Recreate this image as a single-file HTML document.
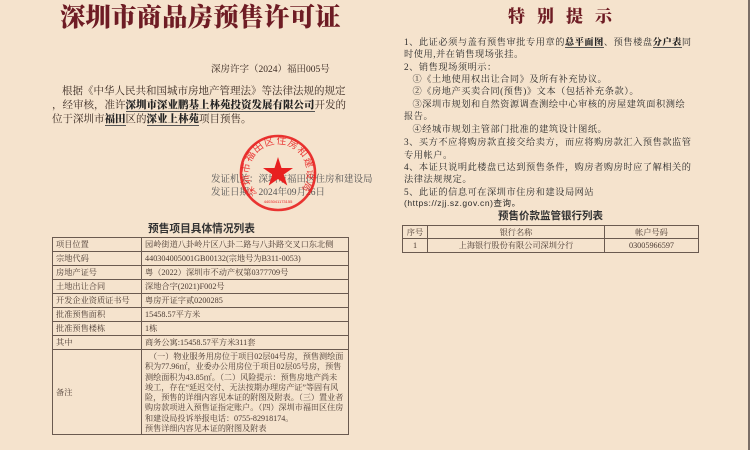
<!DOCTYPE html>
<html><head><meta charset="utf-8"><style>
*{margin:0;padding:0;box-sizing:border-box}
body{width:750px;height:450px;overflow:hidden;background:#f5e3cd;position:relative;font-family:"Liberation Serif","Noto Serif CJK SC",serif;color:#3a2a22}
.abs{position:absolute;white-space:nowrap}
.title{left:60px;top:-2px;font-size:25.5px;font-weight:900;color:#6e1c24;font-family:"Noto Serif CJK SC",serif}
.p{font-size:10.5px;line-height:14px}
b.u{font-weight:900;color:#222;border-bottom:1.5px solid #555}
table{border-collapse:collapse;position:absolute}
td{border:1px solid #6a5a50;font-size:8.2px;padding:0 3px;color:#4a3a32;vertical-align:middle}
.rt{left:404px;font-size:9.2px;letter-spacing:0.55px;color:#2a2a2a}
</style></head><body>
<div class="abs title">深圳市商品房预售许可证</div>
<div class="abs p" style="left:211px;top:63px;font-size:9.5px">深房许字（2024）福田005号</div>
<div class="abs p" style="left:62px;top:85px">根据《中华人民共和国城市房地产管理法》等法律法规的规定</div>
<div class="abs p" style="left:52px;top:99px">，经审核，准许<b class="u">深圳市深业鹏基上林苑投资发展有限公司</b>开发的</div>
<div class="abs p" style="left:52px;top:113px">位于深圳市<b class="u">福田</b>区的<b class="u">深业上林苑</b>项目预售。</div>
<div class="abs p" style="left:211px;top:173px;font-size:9.5px;color:#555">发证机关：深圳市福田区住房和建设局</div>
<div class="abs p" style="left:211px;top:186px;font-size:9.5px;color:#555">发证日期：2024年09月26日</div>
<svg class="abs" style="left:238px;top:133px" width="80" height="80" viewBox="0 0 80 80">
<defs><path id="arc" d="M19.5 60.5 A29 29 0 1 1 60.5 60.5"/></defs>
<circle cx="40" cy="40" r="37" fill="none" stroke="#e82020" stroke-width="2.6" opacity="0.9"/>
<text font-size="10" fill="#e82020" opacity="0.85" font-family="Noto Sans CJK SC" letter-spacing="1"><textPath href="#arc" startOffset="0">深圳市福田区住房和建设局</textPath></text>
<text x="40" y="70" font-size="4" fill="#e82020" text-anchor="middle" font-family="Liberation Sans">4403041173155</text>
<polygon points="40,24 43.5,35 55,35 45.7,41.5 49.3,52.5 40,46 30.7,52.5 34.3,41.5 25,35 36.5,35" fill="#e82020"/>
</svg>
<div class="abs" style="left:148px;top:221px;font-size:10.7px;font-weight:bold;font-family:'Noto Sans CJK SC',sans-serif;color:#333">预售项目具体情况列表</div>
<table style="left:52px;top:237px;width:297px">
<tr style="height:14px"><td style="width:89px">项目位置</td><td>园岭街道八卦岭片区八卦二路与八卦路交叉口东北侧</td></tr>
<tr style="height:14px"><td>宗地代码</td><td>440304005001GB00132(宗地号为B311-0053)</td></tr>
<tr style="height:14px"><td>房地产证号</td><td>粤（2022）深圳市不动产权第0377709号</td></tr>
<tr style="height:14px"><td>土地出让合同</td><td>深地合字(2021)F002号</td></tr>
<tr style="height:14px"><td>开发企业资质证书号</td><td>粤房开证字贰0200285</td></tr>
<tr style="height:14px"><td>批准预售面积</td><td>15458.57平方米</td></tr>
<tr style="height:14px"><td>批准预售楼栋</td><td>1栋</td></tr>
<tr style="height:14px"><td>其中</td><td>商务公寓:15458.57平方米311套</td></tr>
<tr style="height:83px"><td>备注</td><td style="white-space:normal;line-height:10.3px;padding-top:2px;font-size:8.1px">&nbsp;&nbsp;（一）物业服务用房位于项目02层04号房，预售测绘面积为77.96㎡，业委办公用房位于项目02层05号房，预售测绘面积为43.85㎡。（二）风险提示：预售房地产尚未竣工，存在“延迟交付、无法按期办理房产证”等固有风险，预售的详细内容见本证的附图及附表。（三）置业者购房款项进入预售证指定账户。（四）深圳市福田区住房和建设局投诉举报电话：0755-82918174。<br>预售详细内容见本证的附图及附表</td></tr>
</table>
<div class="abs" style="left:508px;top:2px;font-size:17px;font-weight:900;color:#6e1c24;letter-spacing:12px;font-family:'Noto Serif CJK SC',serif">特别提示</div>
<div class="abs rt" style="top:34px">1、此证必须与盖有预售审批专用章的<b class="u">总平面图</b>、预售楼盘<b class="u">分户表</b>同</div>
<div class="abs rt" style="top:46px">时使用,并在销售现场张挂。</div>
<div class="abs rt" style="top:59px">2、销售现场须明示：</div>
<div class="abs rt" style="top:71px">&nbsp;&nbsp;&nbsp;①《土地使用权出让合同》及所有补充协议。</div>
<div class="abs rt" style="top:83px">&nbsp;&nbsp;&nbsp;②《房地产买卖合同(预售)》文本（包括补充条款）。</div>
<div class="abs rt" style="top:96px">&nbsp;&nbsp;&nbsp;③深圳市规划和自然资源调查测绘中心审核的房屋建筑面积测绘</div>
<div class="abs rt" style="top:108px">报告。</div>
<div class="abs rt" style="top:121px">&nbsp;&nbsp;&nbsp;④经城市规划主管部门批准的建筑设计图纸。</div>
<div class="abs rt" style="top:134px">3、买方不应将购房款直接交给卖方，而应将购房款汇入预售款监管</div>
<div class="abs rt" style="top:147px">专用帐户。</div>
<div class="abs rt" style="top:159px">4、本证只说明此楼盘已达到预售条件，购房者购房时应了解相关的</div>
<div class="abs rt" style="top:171px">法律法规规定。</div>
<div class="abs rt" style="top:184px">5、此证的信息可在深圳市住房和建设局网站</div>
<div class="abs rt" style="top:197px;font-size:8.5px;font-family:'Liberation Sans','Noto Sans CJK SC',sans-serif">(https://zjj.sz.gov.cn)查询。</div>
<div class="abs" style="left:498px;top:208px;font-size:10.5px;font-weight:bold;font-family:'Noto Sans CJK SC',sans-serif;color:#333">预售价款监管银行列表</div>
<table style="left:402px;top:225px;width:297px">
<tr style="height:13px"><td style="width:25px;text-align:center">序号</td><td style="width:177px;text-align:center">银行名称</td><td style="text-align:center">帐户号码</td></tr>
<tr style="height:14px"><td style="text-align:center">1</td><td style="text-align:center">上海银行股份有限公司深圳分行</td><td style="text-align:center">03005966597</td></tr>
</table>
<div class="abs" style="left:748px;top:0;width:2px;height:450px;background:#7a6e66"></div>
</body></html>
